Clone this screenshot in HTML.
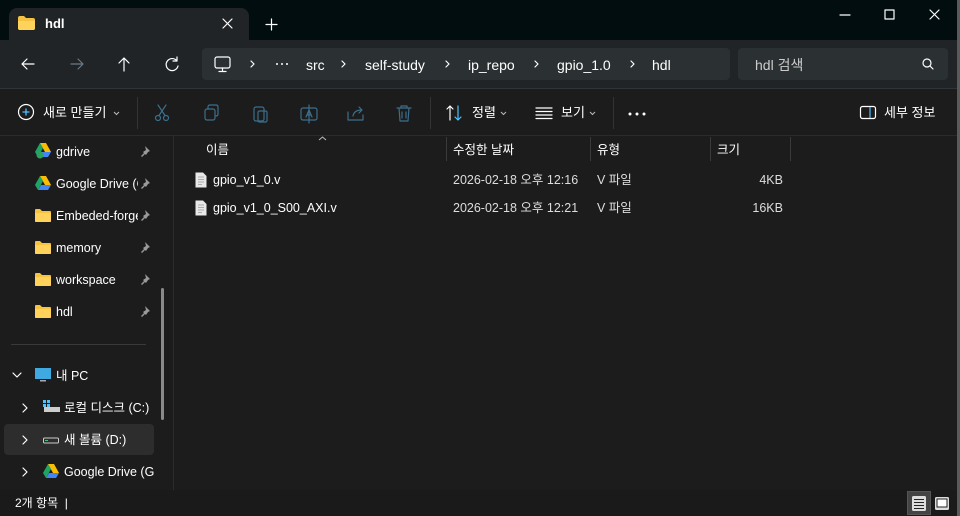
<!DOCTYPE html>
<html><head><meta charset="utf-8"><style>
*{margin:0;padding:0;box-sizing:border-box}
body{width:960px;height:516px;overflow:hidden;background:#1c1c1c;font-family:"Liberation Sans","Noto Sans CJK KR",sans-serif;color:#fff;font-size:12.5px;position:relative}
.a{position:absolute;white-space:nowrap;line-height:16px}
svg{position:absolute;overflow:visible}
.ic{fill:none;stroke:#fff;stroke-width:1.2;stroke-linecap:round;stroke-linejoin:round}
.dim{stroke:#6b7a85}
.blu{stroke:#3b6f8c}
</style></head><body>
<!-- title bar -->
<div class="a" style="left:0;top:0;width:960px;height:40px;background:#020d10"></div>
<div class="a" style="left:9px;top:8px;width:240px;height:32px;background:#202427;border-radius:8px 8px 0 0"></div>
<svg style="left:18px;top:16px" width="17" height="14"><path d="M0 2 Q0 0 2 0 H6 L8 2 H15 Q17 2 17 4 V12 Q17 14 15 14 H2 Q0 14 0 12Z" fill="#f5c242"/><path d="M0 5 H17 V12 Q17 14 15 14 H2 Q0 14 0 12Z" fill="#ffd25c"/></svg>
<div class="a" style="left:45px;top:16px;font-size:13px;font-weight:bold">hdl</div>
<svg style="left:223px;top:19px" width="10" height="10"><path class="ic" d="M0 0L9 9M9 0L0 9"/></svg>
<svg style="left:266px;top:19px" width="11" height="11"><path class="ic" d="M5.5 0V11M0 5.5H11"/></svg>
<svg style="left:360px;top:0" width="600" height="30"><path class="ic" d="M480 15H490"/><rect class="ic" x="525" y="10" width="9" height="9"/><path class="ic" d="M570 10L579 19M579 10L570 19"/></svg>
<!-- nav bar -->
<div class="a" style="left:0;top:40px;width:960px;height:48px;background:#202427"></div>
<svg style="left:0;top:56px" width="200" height="18"><path class="ic" d="M22 8H34M22 8L27 3M22 8L27 13"/><path class="ic dim" d="M71 8H83M83 8L78 3M83 8L78 13"/><path class="ic" d="M124 2V15M124 2L119 7M124 2L129 7"/><path class="ic" d="M177 5A6 6 0 1 0 178 10M177 1V5H173"/></svg>
<div class="a" style="left:202px;top:48px;width:528px;height:32px;background:#2b3033;border-radius:4px"></div>
<svg style="left:214px;top:56px" width="20" height="18"><rect class="ic" x="1" y="1" width="15" height="11" rx="2"/><path class="ic" d="M8.5 12V15M5 15.5H12"/></svg>
<svg style="left:0;top:56px" width="700" height="18"><g class="ic"><path d="M251 5L254 8L251 11M342 5L345 8L342 11M446 5L449 8L446 11M535 5L538 8L535 11M631 5L634 8L631 11"/></g><g fill="#fff"><circle cx="277" cy="8" r="1"/><circle cx="282" cy="8" r="1"/><circle cx="287" cy="8" r="1"/></g></svg>
<div class="a" style="left:0;top:57px;font-size:14px;color:#fff;width:730px;height:20px">
<span class="a" style="left:306px">src</span><span class="a" style="left:365px">self-study</span><span class="a" style="left:468px">ip_repo</span><span class="a" style="left:557px">gpio_1.0</span><span class="a" style="left:652px">hdl</span></div>
<div class="a" style="left:738px;top:48px;width:210px;height:32px;background:#2b3033;border-radius:4px"></div>
<div class="a" style="left:755px;top:57px;font-size:14px;color:#ccc">hdl 검색</div>
<svg style="left:922px;top:58px" width="12" height="12"><circle class="ic" cx="5" cy="5" r="4"/><path class="ic" d="M8 8L11 11"/></svg>
<div class="a" style="left:0;top:88px;width:960px;height:1px;background:#2f3437"></div>
<!-- command bar -->
<svg style="left:18px;top:104px" width="18" height="18"><circle class="ic" cx="8" cy="8" r="7.5"/><path d="M8 4.5V11.5M4.5 8H11.5" stroke="#4cc2ff" stroke-width="1.3"/></svg>
<div class="a" style="left:43px;top:105px;font-size:13px">새로 만들기</div>
<svg style="left:113px;top:111px" width="8" height="5"><path d="M1 1L3.5 3.5L6 1" fill="none" stroke="#bbb"/></svg>
<div class="a" style="left:137px;top:97px;width:1px;height:32px;background:#333"></div>
<svg style="left:155px;top:104px" width="260" height="20"><g class="ic blu"><circle cx="3" cy="14" r="2.5"/><circle cx="11" cy="14" r="2.5"/><path d="M4 11.5L11 1M10 11.5L3 1"/><rect x="50" y="5" width="10" height="11" rx="2"/><path d="M53 5V3Q53 1 55 1H61Q63 1 63 3V10Q63 12 61 12"/><rect x="99" y="3" width="10" height="14" rx="2"/><rect x="103" y="7" width="9" height="11" rx="1.5"/><rect x="146" y="4" width="16" height="12" rx="2"/><path d="M151 13L154 6L157 13M152 11H156M154 1V19"/><path d="M193 8V16H208V11M198 12Q199 6 207 6M204 3L207 6L204 9"/><path d="M242 4H256M246 4V2H252V4M244 4L245 17H253L254 4M247 8V14M251 8V14"/></g></svg>
<div class="a" style="left:430px;top:97px;width:1px;height:32px;background:#333"></div>
<svg style="left:446px;top:105px" width="20" height="16"><path class="ic" d="M4 15V1M4 1L1 4M4 1L7 4"/><path d="M12 1V15M12 15L9 12M12 15L15 12" fill="none" stroke="#4cc2ff" stroke-width="1.2" stroke-linecap="round"/></svg>
<div class="a" style="left:472px;top:105px;font-size:13px">정렬</div>
<svg style="left:500px;top:111px" width="8" height="5"><path d="M1 1L3.5 3.5L6 1" fill="none" stroke="#bbb"/></svg>
<svg style="left:536px;top:107px" width="18" height="12"><path class="ic" d="M0 1H16M0 4.5H16M0 8H16M0 11.5H16"/></svg>
<div class="a" style="left:561px;top:105px;font-size:13px">보기</div>
<svg style="left:589px;top:111px" width="8" height="5"><path d="M1 1L3.5 3.5L6 1" fill="none" stroke="#bbb"/></svg>
<div class="a" style="left:613px;top:97px;width:1px;height:32px;background:#333"></div>
<svg style="left:628px;top:112px" width="20" height="4"><g fill="#fff"><circle cx="2" cy="2" r="1.5"/><circle cx="9" cy="2" r="1.5"/><circle cx="16" cy="2" r="1.5"/></g></svg>
<svg style="left:860px;top:106px" width="16" height="13"><rect class="ic" x="0.5" y="0.5" width="15" height="12" rx="2"/><path d="M10 1V12" stroke="#4cc2ff" stroke-width="1.2"/></svg>
<div class="a" style="left:884px;top:105px;font-size:13px">세부 정보</div>
<div class="a" style="left:0;top:135px;width:960px;height:1px;background:#2b2b2b"></div>
<!-- sidebar -->
<div class="a" style="left:4px;top:424px;width:150px;height:31px;background:#2d2d2d;border-radius:4px"></div>
<div class="a" style="left:173px;top:136px;width:1px;height:354px;background:#2b2b2b"></div>
<div class="a" style="left:161px;top:288px;width:3px;height:132px;background:#8a8a8a;border-radius:2px"></div>
<svg style="left:35px;top:143px" width="16" height="16"><path d="M5 0H11L16 9H10Z" fill="#fbbc04"/><path d="M5 0L0 9L3 14L8 5Z" fill="#1fa463"/><path d="M3 14H13L16 9H6Z" fill="#4285f4"/><circle cx="5" cy="12" r="3.5" fill="#2da160"/></svg>
<svg style="left:35px;top:176px" width="16" height="14"><path d="M5 0H11L16 9H10Z" fill="#fbbc04"/><path d="M5 0L0 9L3 14L8 5Z" fill="#1fa463"/><path d="M3 14H13L16 9H6Z" fill="#4285f4"/></svg>
<div class="a" style="left:56px;top:144px">gdrive</div>
<div class="a" style="left:56px;top:176px;width:82px;overflow:hidden">Google Drive (G</div>
<div class="a" style="left:56px;top:208px;width:82px;overflow:hidden">Embeded-forge</div>
<div class="a" style="left:56px;top:240px">memory</div>
<div class="a" style="left:56px;top:272px">workspace</div>
<div class="a" style="left:56px;top:304px">hdl</div>
<svg style="left:35px;top:209px" width="16" height="200"><g><path d="M0 1Q0 0 1 0H5L7 2H15Q16 2 16 3V12Q16 13 15 13H1Q0 13 0 12Z" fill="#f5c242"/><path d="M0 4H16V12Q16 13 15 13H1Q0 13 0 12Z" fill="#ffd25c"/></g><g transform="translate(0,32)"><path d="M0 1Q0 0 1 0H5L7 2H15Q16 2 16 3V12Q16 13 15 13H1Q0 13 0 12Z" fill="#f5c242"/><path d="M0 4H16V12Q16 13 15 13H1Q0 13 0 12Z" fill="#ffd25c"/></g><g transform="translate(0,64)"><path d="M0 1Q0 0 1 0H5L7 2H15Q16 2 16 3V12Q16 13 15 13H1Q0 13 0 12Z" fill="#f5c242"/><path d="M0 4H16V12Q16 13 15 13H1Q0 13 0 12Z" fill="#ffd25c"/></g><g transform="translate(0,96)"><path d="M0 1Q0 0 1 0H5L7 2H15Q16 2 16 3V12Q16 13 15 13H1Q0 13 0 12Z" fill="#f5c242"/><path d="M0 4H16V12Q16 13 15 13H1Q0 13 0 12Z" fill="#ffd25c"/></g></svg>
<svg style="left:140px;top:146px" width="12" height="180"><g fill="#9a9a9a"><path id="p" d="M5 0L10 5L8 6L6 9L5 8L2 11L1 10L4 7L3 6L6 4Z"/><use href="#p" y="32"/><use href="#p" y="64"/><use href="#p" y="96"/><use href="#p" y="128"/><use href="#p" y="160"/></g></svg>
<div class="a" style="left:11px;top:344px;width:135px;height:1px;background:#3a3a3a"></div>
<svg style="left:0;top:360px" width="40" height="120"><g class="ic"><path d="M13 13L17 17L21 13"/><path d="M23 44L27 48L23 52"/><path d="M23 76L27 80L23 84"/><path d="M23 108L27 112L23 116"/></g></svg>
<svg style="left:35px;top:368px" width="16" height="16"><rect x="0" y="0" width="16" height="11" fill="#3fa9e0"/><rect x="5" y="12" width="6" height="1.5" fill="#aaa"/></svg>
<div class="a" style="left:56px;top:368px">내 PC</div>
<svg style="left:43px;top:400px" width="18" height="14"><rect x="0" y="0" width="3" height="3" fill="#4cc2ff"/><rect x="4" y="0" width="3" height="3" fill="#4cc2ff"/><rect x="0" y="4" width="3" height="3" fill="#4cc2ff"/><rect x="4" y="4" width="3" height="3" fill="#4cc2ff"/><rect x="1" y="7" width="16" height="5" fill="#ccc"/></svg>
<div class="a" style="left:64px;top:400px">로컬 디스크 (C:)</div>
<svg style="left:43px;top:436px" width="16" height="8"><rect x="0.5" y="2" width="15" height="5" rx="1" fill="none" stroke="#ccc"/><rect x="2" y="4" width="3" height="1" fill="#3c6"/></svg>
<div class="a" style="left:64px;top:432px">새 볼륨 (D:)</div>
<svg style="left:43px;top:464px" width="16" height="14"><path d="M5 0H11L16 9H10Z" fill="#fbbc04"/><path d="M5 0L0 9L3 14L8 5Z" fill="#1fa463"/><path d="M3 14H13L16 9H6Z" fill="#4285f4"/></svg>
<div class="a" style="left:64px;top:464px;width:90px;overflow:hidden">Google Drive (G:)</div>
<!-- content headers -->
<svg style="left:318px;top:136px" width="9" height="5"><path d="M1 4L4.5 1L8 4" fill="none" stroke="#bbb"/></svg>
<div class="a" style="left:206px;top:142px">이름</div>
<div class="a" style="left:446px;top:137px;width:1px;height:24px;background:#3a3a3a"></div>
<div class="a" style="left:453px;top:142px">수정한 날짜</div>
<div class="a" style="left:590px;top:137px;width:1px;height:24px;background:#3a3a3a"></div>
<div class="a" style="left:597px;top:142px">유형</div>
<div class="a" style="left:710px;top:137px;width:1px;height:24px;background:#3a3a3a"></div>
<div class="a" style="left:717px;top:142px">크기</div>
<div class="a" style="left:790px;top:137px;width:1px;height:24px;background:#3a3a3a"></div>
<svg style="left:195px;top:172px" width="12" height="45"><g><path d="M0.5 0.5H8L11.5 4V15.5H0.5Z" fill="#e8e8e8"/><path d="M3 5H9M3 7.5H9M3 10H9M3 12.5H7" stroke="#999" stroke-width="0.8"/></g><g transform="translate(0,28)"><path d="M0.5 0.5H8L11.5 4V15.5H0.5Z" fill="#e8e8e8"/><path d="M3 5H9M3 7.5H9M3 10H9M3 12.5H7" stroke="#999" stroke-width="0.8"/></g></svg>
<div class="a" style="left:213px;top:172px">gpio_v1_0.v</div>
<div class="a" style="left:213px;top:200px">gpio_v1_0_S00_AXI.v</div>
<div class="a" style="left:453px;top:172px;color:#ddd">2026-02-18 오후 12:16</div>
<div class="a" style="left:453px;top:200px;color:#ddd">2026-02-18 오후 12:21</div>
<div class="a" style="left:597px;top:172px;color:#ddd">V 파일</div>
<div class="a" style="left:597px;top:200px;color:#ddd">V 파일</div>
<div class="a" style="left:700px;top:172px;width:83px;text-align:right;color:#ddd">4KB</div>
<div class="a" style="left:700px;top:200px;width:83px;text-align:right;color:#ddd">16KB</div>
<!-- status -->
<div class="a" style="left:0;top:490px;width:960px;height:26px;background:#1a1a1a"></div>
<div class="a" style="left:15px;top:495px;font-size:12px">2개 항목 &nbsp;|</div>
<div class="a" style="left:907px;top:491px;width:24px;height:24px;background:#444;border:1px solid #555"></div>
<svg style="left:912px;top:496px" width="40" height="16"><rect x="0" y="0" width="14" height="15" rx="1.5" fill="#ddd"/><path d="M2 3.5H12M2 6.5H12M2 9.5H12M2 12.5H12" stroke="#222" stroke-width="1"/><rect x="23" y="1" width="14" height="13" rx="1.5" fill="#ddd"/><rect x="25" y="3" width="10" height="8" fill="#fff" stroke="#222"/></svg>
<div class="a" style="left:957px;top:0;width:3px;height:516px;background:#5a5a5a"></div>
</body></html>
